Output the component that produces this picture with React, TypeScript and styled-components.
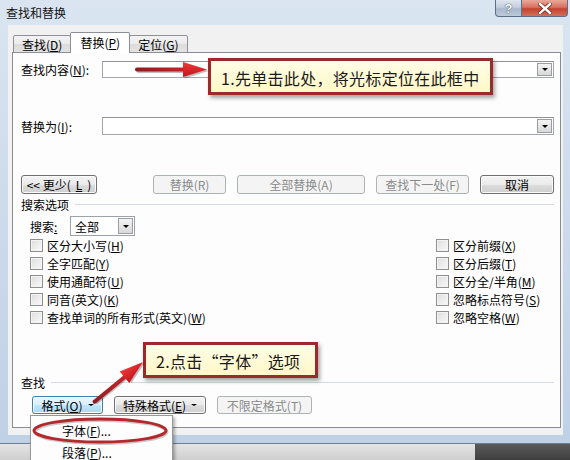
import React from 'react';
import styled, { createGlobalStyle, css } from 'styled-components';

const Global = createGlobalStyle`
  html, body { margin: 0; padding: 0; width: 570px; height: 460px; overflow: hidden; }
  body {
    font-family: "Noto Sans CJK SC", "Noto Sans", "Liberation Sans", sans-serif;
    font-size: 12px;
    color: #000;
  }
`;

const Page = styled.div`
  position: relative;
  width: 570px;
  height: 460px;
  display: flex;
  flex-direction: column;
  overflow: hidden;
`;

const Window = styled.div`
  height: 444px;
  display: flex;
  flex-direction: column;
  padding: 0 7px 8px 8px;
  box-sizing: border-box;
  background: linear-gradient(to bottom, #dae5f1 0%, #cfdcec 40%, #bfd1e6 100%);
  border-bottom: 1px solid #6d7f96;
`;

const TitleBar = styled.div`
  height: 25px;
  display: flex;
  align-items: flex-start;
`;

const Title = styled.div`
  margin-left: -2px;
  padding-top: 5px;
  line-height: 16px;
  font-size: 12px;
  color: #111;
`;

const Caption = styled.div`
  margin-left: auto;
  margin-right: -5px;
  display: flex;
`;

const CapBtn = styled.div<{ $close?: boolean }>`
  height: 17px;
  box-sizing: border-box;
  display: flex;
  align-items: center;
  justify-content: center;
  border: 1px solid #5d6e86;
  border-top: none;
  ${(p) =>
    p.$close
      ? css`
          width: 46px;
          border-left: none;
          border-radius: 0 0 4px 0;
          background: linear-gradient(to bottom, #e9a99b 0%, #d7725f 45%, #c4422e 55%, #d2705a 100%);
        `
      : css`
          width: 27px;
          border-radius: 0 0 0 4px;
          background: linear-gradient(to bottom, #dfe6ef 0%, #c3cfdd 45%, #a9b8cb 55%, #bccad9 100%);
        `}
`;

const HelpGlyph = styled.span`
  font-family: "Liberation Sans", sans-serif;
  font-weight: bold;
  font-size: 13px;
  line-height: 13px;
  color: #fff;
  text-shadow: 0 0 1px #34445a, 0 0 1px #34445a;
`;

const Client = styled.div`
  flex: 1;
  display: flex;
  flex-direction: column;
  padding: 7px 2px 7px 4px;
  background: #f1f1f1;
`;

const TabStrip = styled.div`
  height: 21px;
  display: flex;
  align-items: flex-end;
  padding-left: 1px;
  margin-bottom: -1px;
  position: relative;
  z-index: 1;
`;

const Tab = styled.div<{ $active?: boolean }>`
  box-sizing: border-box;
  display: flex;
  align-items: center;
  justify-content: center;
  border: 1px solid #8d9096;
  border-bottom: none;
  border-radius: 2px 2px 0 0;
  font-size: 12px;
  ${(p) =>
    p.$active
      ? css`
          height: 21px;
          padding: 0 9px 1px;
          background: #fff;
          margin: 0 -1px;
          position: relative;
          z-index: 2;
        `
      : css`
          height: 18px;
          padding: 0 8px;
          background: linear-gradient(to bottom, #f3f3f3 0%, #ebebeb 50%, #dcdcdc 51%, #e3e3e3 100%);
          border-bottom: 1px solid #8d9096;
        `}
`;

const Panel = styled.div`
  flex: 1;
  display: flex;
  flex-direction: column;
  border: 1px solid #898c95;
  background: #fdfdfd;
  padding: 0 6px 0 8px;
`;

const FieldRow = styled.div<{ $mt: number; $h: number }>`
  margin-top: ${(p) => p.$mt}px;
  height: ${(p) => p.$h}px;
  display: flex;
  align-items: center;
`;

const FieldLabel = styled.div`
  width: 81px;
  flex: none;
  white-space: nowrap;
`;

const Combo = styled.div`
  flex: 1;
  height: 100%;
  box-sizing: border-box;
  border: 1px solid #a3a6ad;
  border-top-color: #8e9198;
  background: #fff;
  display: flex;
  justify-content: flex-end;
  align-items: center;
  padding-right: 1px;
`;

const DropBtn = styled.div<{ $w?: number }>`
  width: ${(p) => p.$w ?? 15}px;
  height: calc(100% - 2px);
  box-sizing: border-box;
  border: 1px solid #9a9ea4;
  background: linear-gradient(to bottom, #f4f4f4, #d8d8d8);
  display: flex;
  align-items: center;
  justify-content: center;
`;

const Tri = styled.span<{ $s?: number }>`
  width: 0;
  height: 0;
  border-left: ${(p) => p.$s ?? 3.5}px solid transparent;
  border-right: ${(p) => p.$s ?? 3.5}px solid transparent;
  border-top: ${(p) => (p.$s ?? 3.5) - 0.5}px solid #000;
`;

const ButtonRow = styled.div`
  margin-top: 40px;
  height: 19px;
  display: flex;
  justify-content: space-between;
`;

const ButtonGroup = styled.div<{ $gap: number }>`
  display: flex;
  gap: ${(p) => p.$gap}px;
`;

const Btn = styled.div<{ $w: number; $disabled?: boolean; $hot?: boolean }>`
  width: ${(p) => p.$w}px;
  height: 100%;
  box-sizing: border-box;
  display: flex;
  align-items: center;
  justify-content: center;
  gap: 5px;
  border-radius: 3px;
  font-size: 12px;
  white-space: nowrap;
  border: 1px solid #707070;
  background: linear-gradient(to bottom, #f3f3f3 0%, #ebebeb 50%, #dddddd 51%, #cfcfcf 100%);
  box-shadow: inset 0 0 0 1px #fbfbfb;
  color: #000;
  ${(p) =>
    p.$disabled &&
    css`
      border-color: #adb2b5;
      background: #f4f4f4;
      box-shadow: none;
      color: #8a8a8a;
    `}
  ${(p) =>
    p.$hot &&
    css`
      border-color: #3c7fb1;
      background: linear-gradient(to bottom, #eaf6fd 0%, #d9f0fc 50%, #bee6fd 51%, #a7d9f5 100%);
    `}
`;

const GroupHeader = styled.div<{ $mt: number }>`
  margin-top: ${(p) => p.$mt}px;
  height: 12px;
  display: flex;
  align-items: center;
  gap: 6px;
  &::after {
    content: '';
    flex: 1;
    border-top: 1px solid #d5dbe0;
  }
`;

const SearchRow = styled.div`
  margin-top: 6px;
  height: 20px;
  display: flex;
  align-items: center;
  padding-left: 9px;
`;

const SearchLabel = styled.div`
  width: 40px;
`;

const Select = styled.div`
  width: 65px;
  height: 100%;
  box-sizing: border-box;
  border: 1px solid #9da1a8;
  background: #fff;
  display: flex;
  align-items: center;
  padding-left: 4px;
  padding-right: 1px;
`;

const SelectText = styled.span`
  flex: 1;
`;

const CheckGrid = styled.div`
  margin-top: 0;
  padding-left: 9px;
  display: grid;
  grid-template-columns: 406px 1fr;
  grid-template-rows: repeat(5, 18px);
  grid-auto-flow: column;
`;

const CheckItem = styled.div`
  display: flex;
  align-items: center;
  gap: 4px;
  white-space: nowrap;
`;

const Box = styled.span`
  width: 13px;
  height: 13px;
  box-sizing: border-box;
  border: 1px solid #8f8f8f;
  background: linear-gradient(135deg, #dcdcdc 0%, #ececec 50%, #f8f8f8 100%);
  box-shadow: inset 0 0 0 1px #f4f4f4;
`;

const FormatRow = styled.div`
  margin-top: 8px;
  height: 18px;
  display: flex;
  gap: 11px;
  padding-left: 11px;
`;

const Mn = styled.span`
  text-decoration: underline;
  text-underline-offset: 1px;
`;

const K = ({ k }: { k: string }) => (
  <>
    (<Mn>{k}</Mn>)
  </>
);

const Desktop = styled.div`
  flex: 1;
  display: flex;
`;

const DesktopPart = styled.div<{ $dark?: boolean }>`
  flex: ${(p) => (p.$dark ? '0 0 95px' : '1')};
  background: ${(p) => (p.$dark ? 'linear-gradient(#5a5a5a, #3e3e3e)' : 'linear-gradient(#e4e4e4, #cfcfcf)')};
`;

const Menu = styled.div`
  position: absolute;
  left: 30px;
  top: 415px;
  width: 143px;
  height: 60px;
  box-sizing: border-box;
  border: 1px solid #979797;
  background: #fdfdfd;
  box-shadow: 2px 2px 3px rgba(0, 0, 0, 0.3);
  padding-top: 3px;
  z-index: 5;
`;

const MenuItem = styled.div`
  height: 22px;
  display: flex;
  align-items: center;
  padding-left: 31px;
  font-size: 12px;
`;

const Callout = styled.div<{ $x: number; $y: number; $w: number; $h: number }>`
  position: absolute;
  left: ${(p) => p.$x}px;
  top: ${(p) => p.$y}px;
  width: ${(p) => p.$w}px;
  height: ${(p) => p.$h}px;
  box-sizing: border-box;
  border: 3px solid #9c2a2c;
  background: linear-gradient(to bottom, #fffde6 0%, #fff8c8 100%);
  box-shadow: 2px 3px 4px rgba(0, 0, 0, 0.35);
  display: flex;
  align-items: center;
  padding: 2px 0 0 10px;
  font-size: 16px;
  letter-spacing: 0.3px;
  color: #1a1a1a;
  white-space: nowrap;
  z-index: 6;
`;

const Overlay = styled.svg`
  position: absolute;
  left: 0;
  top: 0;
  width: 570px;
  height: 460px;
  pointer-events: none;
  z-index: 7;
`;

function Arrow({ x1, y1, x2, y2 }: { x1: number; y1: number; x2: number; y2: number }) {
  const len = Math.hypot(x2 - x1, y2 - y1);
  const ang = (Math.atan2(y2 - y1, x2 - x1) * 180) / Math.PI;
  return (
    <g transform={`translate(${x1} ${y1}) rotate(${ang})`}>
      <g transform="translate(1.5 1.5)" opacity={0.25}>
        <rect x={0} y={-2} width={len - 20} height={4} rx={2} fill="#000" />
        <polygon points={`${len - 24},-7.5 ${len},0 ${len - 24},7.5`} fill="#000" />
      </g>
      <rect x={0} y={-2} width={len - 20} height={4} rx={2} fill="url(#shaft)" />
      <polygon points={`${len - 24},-7.5 ${len},0 ${len - 24},7.5`} fill="url(#head)" />
    </g>
  );
}

const leftChecks: React.ReactNode[] = [
  <>区分大小写<K k="H" /></>,
  <>全字匹配<K k="Y" /></>,
  <>使用通配符<K k="U" /></>,
  <>同音(英文)<K k="K" /></>,
  <>查找单词的所有形式(英文)<K k="W" /></>,
];
const rightChecks: React.ReactNode[] = [
  <>区分前缀<K k="X" /></>,
  <>区分后缀<K k="T" /></>,
  <>区分全/半角<K k="M" /></>,
  <>忽略标点符号<K k="S" /></>,
  <>忽略空格<K k="W" /></>,
];

export default function App() {
  return (
    <Page>
      <Global />
      <Window>
        <TitleBar>
          <Title>查找和替换</Title>
          <Caption>
            <CapBtn>
              <HelpGlyph>?</HelpGlyph>
            </CapBtn>
            <CapBtn $close>
              <svg width="14" height="11" viewBox="0 0 14 11">
                <path d="M2 1 L12 10 M12 1 L2 10" stroke="#6b2a22" strokeWidth="4" strokeLinecap="square" />
                <path d="M2 1 L12 10 M12 1 L2 10" stroke="#fff" strokeWidth="2.4" strokeLinecap="square" />
              </svg>
            </CapBtn>
          </Caption>
        </TitleBar>
        <Client>
          <TabStrip>
            <Tab>查找<K k="D" /></Tab>
            <Tab $active>替换<K k="P" /></Tab>
            <Tab>定位<K k="G" /></Tab>
          </TabStrip>
          <Panel>
            <FieldRow $mt={8} $h={17}>
              <FieldLabel>查找内容<K k="N" />:</FieldLabel>
              <Combo>
                <DropBtn>
                  <Tri />
                </DropBtn>
              </Combo>
            </FieldRow>
            <FieldRow $mt={39} $h={18}>
              <FieldLabel>替换为<K k="I" />:</FieldLabel>
              <Combo>
                <DropBtn>
                  <Tri />
                </DropBtn>
              </Combo>
            </FieldRow>
            <ButtonRow>
              <Btn $w={76}>&lt;&lt; 更少<K k="L" /></Btn>
              <ButtonGroup $gap={11}>
                <Btn $w={73} $disabled>替换(R)</Btn>
                <Btn $w={128} $disabled>全部替换(A)</Btn>
                <Btn $w={93} $disabled>查找下一处(F)</Btn>
                <Btn $w={74}>取消</Btn>
              </ButtonGroup>
            </ButtonRow>
            <GroupHeader $mt={4}>搜索选项</GroupHeader>
            <SearchRow>
              <SearchLabel>搜索<Mn>:</Mn></SearchLabel>
              <Select>
                <SelectText>全部</SelectText>
                <DropBtn $w={15}>
                  <Tri />
                </DropBtn>
              </Select>
            </SearchRow>
            <CheckGrid>
              {leftChecks.map((c, i) => (
                <CheckItem key={'l' + i}>
                  <Box />
                  <span>{c}</span>
                </CheckItem>
              ))}
              {rightChecks.map((c, i) => (
                <CheckItem key={'r' + i}>
                  <Box />
                  <span>{c}</span>
                </CheckItem>
              ))}
            </CheckGrid>
            <GroupHeader $mt={50}>查找</GroupHeader>
            <FormatRow>
              <Btn $w={71} $hot>
                <span>格式<K k="O" /></span>
                <Tri $s={3} />
              </Btn>
              <Btn $w={92}>
                <span>特殊格式<K k="E" /></span>
                <Tri $s={3} />
              </Btn>
              <Btn $w={95} $disabled>不限定格式(T)</Btn>
            </FormatRow>
          </Panel>
        </Client>
      </Window>
      <Desktop>
        <DesktopPart />
        <DesktopPart $dark />
      </Desktop>

      <Menu>
        <MenuItem>字体<K k="F" />...</MenuItem>
        <MenuItem>段落<K k="P" />...</MenuItem>
      </Menu>

      <Callout $x={208} $y={58} $w={285} $h={37}>1.先单击此处，将光标定位在此框中</Callout>
      <Callout $x={143} $y={342} $w={175} $h={36}>2.点击“字体”选项</Callout>

      <Overlay viewBox="0 0 570 460">
        <defs>
          <linearGradient id="shaft" x1="0" y1="0" x2="1" y2="0">
            <stop offset="0" stopColor="#8f1c20" />
            <stop offset="1" stopColor="#c8242a" />
          </linearGradient>
          <linearGradient id="head" x1="0" y1="0" x2="0" y2="1">
            <stop offset="0" stopColor="#f0393c" />
            <stop offset="1" stopColor="#c0161b" />
          </linearGradient>
        </defs>
        <Arrow x1={135} y1={69.5} x2={207} y2={69.5} />
        <Arrow x1={93} y1={403} x2={143} y2={362} />
        <ellipse cx={100} cy={430.5} rx={66} ry={11.5} fill="none" stroke="#000" strokeOpacity={0.2} strokeWidth={3} transform="translate(1 1.5)" />
        <ellipse cx={100} cy={430.5} rx={66} ry={11.5} fill="none" stroke="#b3292c" strokeWidth={3} />
      </Overlay>
    </Page>
  );
}
